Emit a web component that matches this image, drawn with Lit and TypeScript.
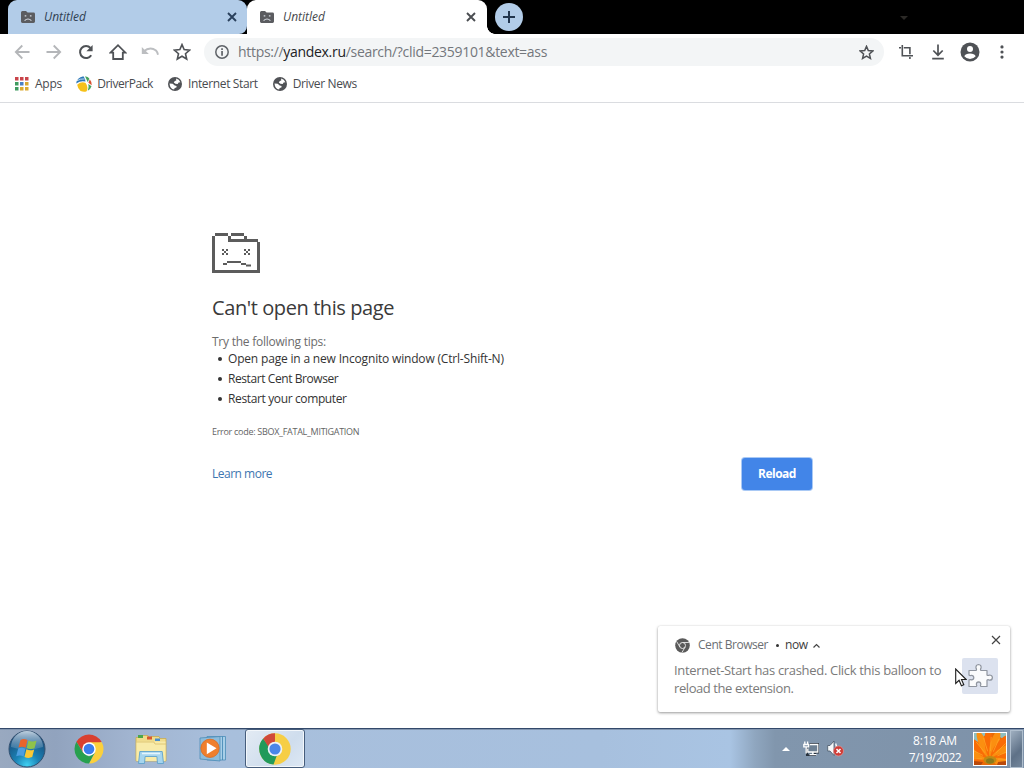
import { LitElement, html, css, svg } from "lit";
import { customElement, property } from "lit/decorators.js";
import { classMap } from "lit/directives/class-map.js";

const icon = (w: number, h: number, body: unknown, box = `0 0 ${w} ${h}`) =>
  html`<svg width=${w} height=${h} viewBox=${box}>${body}</svg>`;

const smallFolder = icon(14, 12, svg`
  <path d="M0 1.5Q0 0 1.4 0H5l1.6 1.6h6Q14 1.6 14 3v7.6Q14 12 12.6 12H1.4Q0 12 0 10.6Z" fill="#5b5c60"/>
  <path d="M3.7 4.2h1.6v1.4H3.7zM8.9 4.2h1.6v1.4H8.9z" fill="#d6dbe2"/>
  <path d="M3.6 9.6Q7 6.4 10.4 9.6" stroke="#d6dbe2" stroke-width="1.1" fill="none"/>`);

const sadFolder = icon(48, 40, svg`
  <path fill="#5c5c5c" d="M3 0h13v3H3zM0 3h3v37H0zM3 37h45v3H3zM45 9h3v28h-3zM16 3h3v5.500h-3zM19 0h13v3H19zM32 3h3v4h-3zM16 6h30v3H16z"/>
  <path fill="#5c5c5c" d="M10 16h2v2h-2zM14 16h2v2h-2zM12 18h2v2h-2zM10 20h2v2h-2zM14 20h2v2h-2zM32 16h2v2h-2zM36 16h2v2h-2zM34 18h2v2h-2zM32 20h2v2h-2zM36 20h2v2h-2z"/>
  <path fill="#5c5c5c" d="M11 30h4v2h-4zM15 28h14v2H15zM29 30h5v2h-5zM34 31.500h5v2h-5z"/>`);

const arrow = (flip: boolean) => icon(16, 16, svg`
  <path transform=${flip ? "translate(16 0) scale(-1 1)" : ""} d="M15.500 8H2M8.300 1.500L1.800 8l6.500 6.500" fill="none" stroke="#b4b6b9" stroke-width="1.800"/>`);

const reloadIcon = icon(16, 16, svg`
  <path d="M13.200 11.200A6 6 0 1 1 12.500 4" fill="none" stroke="#4f5256" stroke-width="2"/>
  <path d="M14.600 1v6.200H8.400Z" fill="#4f5256"/>`);

const homeIcon = icon(18, 18, svg`
  <path d="M1.500 9.700L9 2.200l7.500 7.500H13.800V16H4.200V9.700Z" fill="none" stroke="#4f5256" stroke-width="1.800"/>`);

const undoIcon = icon(18, 12, svg`
  <path d="M2.500 5.500Q9 .2 15 4.500 16.400 6 17 8.800" fill="none" stroke="#bcbec1" stroke-width="1.900"/>
  <path d="M.8 1v7h7Z" fill="#bcbec1"/>`);

const star = (s: number, w: number) => icon(s, s, svg`
  <path d="M9 1.600l2.150 5 5.450.5-4.120 3.600 1.230 5.300L9 13.200 4.290 16l1.230-5.300L1.400 7.100l5.450-.5Z" fill="none" stroke="#4f5256" stroke-width=${w} stroke-linejoin="miter"/>`, "0 0 18 18");

const infoIcon = icon(14, 14, svg`
  <circle cx="7" cy="7" r="6.200" fill="none" stroke="#5f6368" stroke-width="1.500"/>
  <path d="M6.200 3.300h1.700v1.600H6.200zM6.200 6.100h1.700v4.700H6.200z" fill="#5f6368"/>`);

const cropIcon = icon(14, 14, svg`
  <path d="M3.300 0V10.700H14M0 2.800h2M4.800 2.800H10.900V9.300M10.900 12v2" fill="none" stroke="#4f5256" stroke-width="1.600"/>`);

const downloadIcon = icon(14, 16, svg`
  <path d="M7 .5v10.300M2.300 6.500L7 11.200l4.700-4.700M1.200 14.600h11.600" fill="none" stroke="#4f5256" stroke-width="1.700"/>`);

const profileIcon = icon(20, 20, svg`
  <circle cx="10" cy="10" r="9.500" fill="#4f5256"/>
  <circle cx="10" cy="6.900" r="3" fill="#fff"/>
  <path d="M4.300 14.300Q5.500 11.600 10 11.600t5.700 2.700Q13.500 17 10 17t-5.700-2.700Z" fill="#fff"/>`);

const dotsIcon = icon(4, 14, svg`
  <circle cx="2" cy="1.900" r="1.600" fill="#4f5256"/><circle cx="2" cy="7" r="1.600" fill="#4f5256"/><circle cx="2" cy="12.100" r="1.600" fill="#4f5256"/>`);

const cross = (s: number, w: number, c: string) => icon(s, s, svg`
  <path d="M1 1l8 8M9 1L1 9" stroke=${c} stroke-width=${w}/>`, "0 0 10 10");

const appColors = ["#c9444a", "#c9444a", "#c9444a", "#3f9a5f", "#4a7fc4", "#d9a52e", "#3f9a5f", "#dcaa30", "#dcaa30"];
const appsIcon = icon(14, 14, appColors.map((c, i) =>
  svg`<rect x=${(i % 3) * 5} y=${Math.floor(i / 3) * 5} width="3.500" height="3.500" fill=${c}/>`));

const driverPackIcon = icon(16, 16, svg`
  <path d="M1.200 8.800Q5 5.200 9.400 6.800 12.800 11 10.600 15.200 8 16.400 4.600 14.900 1.600 12.800 1.200 8.800Z" fill="#f6c119"/>
  <path d="M.2 7.400Q.8 1.500 7.400.2L9 2.800 9.500 5.600Q5 4.200.2 7.400Z" fill="#2c78b8"/>
  <path d="M.8 4.800Q4 2.600 8.800 2.900" stroke="#fff" stroke-width=".7" fill="none"/>
  <path d="M9 .2q3 .3 4.300 2.400L11.800 6.200Z" fill="#45a35b"/>
  <path d="M13.800 3.300Q16 6 15.700 9.300L12.400 6.800Z" fill="#d9502f"/>
  <path d="M12.300 8l3.200 2.300Q14.500 13.500 11.800 14.800 13.300 11.500 12.300 8Z" fill="#45a35b"/>`);

const globeIcon = icon(14, 14, svg`
  <circle cx="7" cy="7" r="7" fill="#505256"/>
  <path d="M8 1.600q3.300.5 4.400 3.600l-1.800.2-.9 1.500-2.300-.2-1.600-1.200 1-1.500 1.500-.4Z" fill="#fff"/>
  <path d="M1.500 6.500l3.200.3 2 1.600 1.900.6-.2 1.500-1.700.5-.6 1.600Q2 12 1.500 6.500Z" fill="#fff"/>`);

const monoChrome = icon(15, 15, svg`
  <circle cx="7.500" cy="7.500" r="7.300" fill="#5a5a5a"/>
  <circle cx="7.500" cy="7.500" r="3" fill="none" stroke="#e8e8e8" stroke-width="1"/>
  <path d="M7.500 4.500h6.400M4.900 9L1.700 3.600M10.100 9l-3.200 5.600" stroke="#e8e8e8" stroke-width=".9"/>`);

const chromeLogo = (s: number) => icon(s, s, svg`
  <path d="M16 16L2.600 8.250A15.500 15.500 0 0 1 29.400 8.250Z" fill="#d9402f"/>
  <path d="M16 8.800H29.700A15.500 15.500 0 0 1 16 31.500L22.400 19.600Z" fill="#fbd03c"/>
  <path d="M2.600 8.250L9.800 20 16 16 17 8.800Z" fill="#d9402f"/>
  <path d="M2.600 8.250L9.500 19.600 16 24 22 20 16 31.500A15.500 15.500 0 0 1 2.600 8.250Z" fill="#27a04f"/>
  <circle cx="16" cy="16" r="7.200" fill="#fff"/><circle cx="16" cy="16" r="5.700" fill="#3b7ded"/>`, "0 0 32 32");

const activeChrome = icon(32, 32, svg`
  <circle cx="16" cy="16" r="15.700" fill="#f6ce45"/>
  <path d="M4.200 5.600A15.700 15.700 0 0 0 14.500 31.600L18 22 10 17 9.300 12.600Z" fill="#229a5a"/>
  <path d="M16 .3V9l-6.500 5L4.200 5.600A15.700 15.700 0 0 1 16 .3Z" fill="#d0493a"/>
  <circle cx="16" cy="16" r="7.300" fill="#eef2f6"/><circle cx="16" cy="16" r="5.600" fill="#4a86e8"/>`);

const startOrb = icon(38, 38, svg`
  <defs>
    <radialGradient id="orb" cx=".5" cy=".95" r=".85"><stop offset="0" stop-color="#3fd0f2"/><stop offset=".4" stop-color="#1b82b5"/><stop offset="1" stop-color="#194a78"/></radialGradient>
    <linearGradient id="gloss" x2="0" y2="1"><stop offset="0" stop-color="#dbe8f2" stop-opacity=".85"/><stop offset="1" stop-color="#8fb2cf" stop-opacity=".25"/></linearGradient>
  </defs>
  <circle cx="19" cy="19" r="18" fill="url(#orb)" stroke="#33506f" stroke-width="1"/>
  <path d="M3 17A16 16 0 0 1 35 17Q19 22 3 17Z" fill="url(#gloss)"/>
  <path d="M12.500 10q3.200-2 7 .1l-1.800 7.600q-3.400-1.900-7.200-.2Z" fill="#e8642c"/>
  <path d="M20.500 10.600q3.500 1.800 8 .1l-2 7.500q-3.900 1.600-7.800-.1Z" fill="#8fc24a"/>
  <path d="M10.200 18.500q3.500-1.600 7.200.3L15.600 26.500q-3.300-1.900-7.400-.3Z" fill="#4c9ee0"/>
  <path d="M18.400 19.300q3.600 1.900 7.800.1l-2 7.700q-3.700 1.700-7.700-.2Z" fill="#fbc835"/>`);

const explorerIcon = icon(34, 30, svg`
  <path d="M2 3.500h4l1-2h7l1 2h2v-1h8l1 2h6V27H2Z" fill="#f0dc8c" stroke="#c9ac50" stroke-width=".8"/>
  <path d="M4 1h5v3H4z" fill="#4ca64b"/><path d="M13 2.500h5v3h-5z" fill="#d9582e"/><path d="M21 4.500h5v2.500h-5z" fill="#4b8fcb"/>
  <path d="M2.500 7.500h29V27h-29Z" fill="#f8eba9"/>
  <path d="M2 8h18l1 2h11" stroke="#d9bf6a" stroke-width=".8" fill="none"/>
  <path d="M4.500 29.500l1.300-12h22.400l1.300 12h-6l-.6-7H11.100l-.6 7Z" fill="#a6d5ee" stroke="#5fa3cc" stroke-width=".9"/>
  <path d="M8 19.500h18" stroke="#e4f5fd" stroke-width="1.500"/>`);

const playerIcon = icon(28, 27, svg`
  <path d="M8 1.500H26.500V25H8Z" fill="#a8cfe8" stroke="#4b8db8" stroke-width=".8"/>
  <path d="M23.500 1.500V25" stroke="#3f83b0" stroke-width=".8"/>
  <path d="M1 3L21 1.500V26L1 24Z" fill="#8dbcdb" stroke="#4b8db8" stroke-width=".8"/>
  <circle cx="11" cy="13.300" r="9.200" fill="#ef7f2d" stroke="#d8681d" stroke-width=".7"/>
  <path d="M7.800 7.500L17.500 13.300 7.800 19.200Z" fill="#fff"/>`);

const networkIcon = icon(16, 15, svg`
  <path d="M6.500 3H15.300V11.500H12v2.700H4V6.500" fill="#6d8093" stroke="#27313d" stroke-width="2"/>
  <path d="M1.800 .5v3M4.600 .5v3M.8 3.500h4.800v2.300H.8zM3.200 6v6.500M6.800 3.500h8v7.500H4.800V7.500M9.800 11v2M6.500 13.700h7" fill="none" stroke="#fff" stroke-width="1.300"/>`);

const volumeIcon = icon(17, 17, svg`
  <path d="M.7 5.500H3L7 1v14.500L3 11H.7Z" fill="#f6f8fa" stroke="#475767" stroke-width=".8"/>
  <path d="M8.700 3.500Q10.500 8 8.700 12" stroke="#fff" stroke-width="1.300" fill="none"/>
  <circle cx="11.500" cy="11" r="5" fill="#cf3c37" stroke="#e9a19d" stroke-width=".6"/>
  <path d="M9.500 9l4 4M13.500 9l-4 4" stroke="#fff" stroke-width="1.500"/>`);

const petals = [-96, -70, -46, -24, -4, 17, 38, 60, 84, 106];
const flowerIcon = icon(32, 32, svg`
  <rect width="32" height="32" fill="#e86a08"/>
  <path d="M0 0h13L6 8 0 11ZM21 0h11v8l-6-4Z" fill="#8fbfc0"/>
  ${petals.map((a, i) => svg`<ellipse cx="16" cy="10" rx="4.200" ry="14" fill=${i % 2 ? "#fb8f10" : "#f96c06"} transform=${`rotate(${a} 16 26)`}/>`)}
  ${petals.map((a) => svg`<path d="M16 18V4" stroke="#ffa726" stroke-width=".7" transform=${`rotate(${a + 7} 16 26)`}/>`)}
  <path d="M0 28l9 1-2 3H0ZM24 29l8-1v4h-9Z" fill="#b9490a"/>
  <ellipse cx="16" cy="27" rx="6.500" ry="4" fill="#c08a14"/><ellipse cx="16" cy="28" rx="4" ry="2.800" fill="#8a7a1c"/>`);

const puzzleIcon = icon(26, 26, svg`
  <path d="M2 7.500H9Q10 6.500 9 5.200 8.600 1.800 11.500 1.500 14.600 1.800 14 5.200 13 6.500 14 7.500H20V12Q21 13 22.300 12 25.300 12 25.400 14.600 25.200 17.400 22.300 17.200 21 16.200 20 17.200V23.500H14Q13 22.700 13.800 21.500 13.900 19 11.600 18.900 9.300 19 9.400 21.500 10.200 22.700 9.200 23.500H2V17Q3 16.200 4.500 16.900 6.700 16.700 6.800 14.600 6.700 12.400 4.500 12.300 3 13 2 12Z" fill="#fafbfc" stroke="#8f959f" stroke-width="1.200" stroke-linejoin="round"/>`);

const cursor = icon(12, 19, svg`
  <path d="M.7 1v14.500l3.400-3.200 2.300 5.500 2.400-1-2.300-5.300h4.700Z" fill="#fff" stroke="#1c1c1c" stroke-width="1.100"/>`);

const blockSvg = css`svg { display: block; flex: none; }`;

@customElement("browser-tab")
class BrowserTab extends LitElement {
  @property({ type: Boolean }) active = false;
  static styles = [blockSvg, css`
    :host { display: block; width: 239px; height: 34px; }
    :host([active]) { width: 240px; }
    .tab { display: flex; align-items: center; box-sizing: border-box; width: 100%; height: 34px; padding: 0 10px 0 13px;
      border-radius: 9px 9px 8px 0; background: #b2cce8; color: #2f3f52; }
    .active { background: #fff; color: #45484c; border-radius: 9px 9px 0 0; padding-right: 11px; }
    .title { flex: 1; margin-left: 9px; font: italic 12px/18px "Open Sans", sans-serif; }
  `];
  render() {
    return html`<div class=${classMap({ tab: true, active: this.active })}>
      ${smallFolder}<span class="title">Untitled</span>${cross(10, 1.9, this.active ? "#4a4d51" : "#2a405c")}
    </div>`;
  }
}

@customElement("app-root")
class AppRoot extends LitElement {
  static styles = [blockSvg, css`
    :host { display: flex; flex-direction: column; width: 1024px; height: 768px; overflow: hidden; position: relative;
      background: #fff; font-family: "Open Sans", "Noto Sans", sans-serif; font-size: 12px; line-height: 20px; color: #333; }
    span, a, p, h1, li { white-space: nowrap; }
    .strip { display: flex; height: 34px; padding-left: 8px; background: #000; flex: none; align-items: center; }
    .under { width: 239px; height: 34px; background: #fff; border-radius: 9px 18px 0 0; }
    .flare { width: 8px; height: 8px; align-self: flex-end; background: radial-gradient(circle at 100% 0, transparent 7.500px, #fff 8px); }
    .plus { display: grid; place-items: center; width: 28px; height: 28px; border-radius: 50%; background: #b2cce8; }
    .caret { margin-left: 377px; margin-top: 2px; border: 4px solid transparent; border-top-color: #2b2926; border-bottom: 0; }
    .toolbar { display: flex; align-items: center; height: 36px; flex: none; padding-left: 6px; }
    .nav, .tools { display: flex; align-items: center; flex: none; }
    .cell { display: grid; place-items: center; width: 32px; }
    .omni { display: flex; align-items: center; flex: none; box-sizing: border-box; width: 680px; height: 28px; margin-left: 6px;
      padding: 0 10px 0 11px; border-radius: 14px; background: #f3f5f6; }
    .url { flex: 1; margin-left: 9px; font-size: 14px; letter-spacing: -.306px; color: #73777c; }
    .url b { font-weight: 400; color: #202124; }
    .tools { margin-left: 6px; }
    .marks { display: flex; align-items: center; flex: none; height: 33px; padding: 0 0 5px 15px; border-bottom: 1px solid #dadce0; box-sizing: border-box; }
    .mark { display: flex; align-items: center; color: #484b4f; }
    .page { flex: 1; padding: 130px 212px 0; min-height: 0; }
    h1 { margin: 23px 0 0; font-size: 20px; line-height: 24px; font-weight: 400; letter-spacing: -.41px; color: #3a3a3a; }
    .tips { margin: 13px 0 0; line-height: 18px; letter-spacing: -.24px; color: #6c6c6c; }
    ul { margin: -2px 0 0; padding: 0; list-style: none; }
    li { display: flex; align-items: center; height: 20px; }
    li::before { content: ""; width: 4px; height: 4px; border-radius: 50%; background: #333; margin: 0 6px 1px; }
    .code { margin: 15px 0 0; font-size: 9px; line-height: 16px; letter-spacing: -.29px; color: #646464; }
    .actions { display: flex; align-items: center; justify-content: space-between; width: 600px; margin-top: 18px; }
    .link { color: #3d76b0; letter-spacing: -.5px; }
    .reload { display: grid; place-items: center; width: 70px; height: 32px; border-radius: 3px; background: #4285e8; box-shadow: 0 0 0 1px #a9c9f5;
      color: #fff; font-weight: 700; letter-spacing: -.5px; }
    .toast { position: absolute; left: 658px; top: 626px; box-sizing: border-box; width: 352px; height: 86px; background: #fff; border-radius: 2px;
      box-shadow: 0 1px 3px rgba(0,0,0,.4), 0 0 1px rgba(0,0,0,.12); display: flex; padding: 9px 9px 0 16px; }
    .words { flex: 1; min-width: 0; }
    .source { display: flex; align-items: center; height: 20px; padding-left: 1px; color: #6c6f73; }
    .dot { width: 3px; height: 3px; border-radius: 50%; background: #333; margin: 0 6px 0 8px; }
    .now { color: #3c3c3c; letter-spacing: -.4px; margin-right: 5px; }
    .words p { margin: 0; font-size: 13px; line-height: 18px; color: #7a7a7a; }
    .side { display: flex; flex-direction: column; align-items: flex-end; }
    .puzzle { display: grid; place-items: center; width: 36px; height: 36px; margin: 13px 3px 0 0; background: #dce2ef; border-radius: 2px; }
    .pointer { position: absolute; left: 955px; top: 668px; }
    .taskbar { display: flex; align-items: center; flex: none; box-sizing: border-box; height: 40px; border-top: 1px solid #33496a; color: #fff;
      background: linear-gradient(90deg, #99a9c0 0, #91a3be 55px, #a1b4d0 130px, #a8bfdc 220px, #a7c0de 600px, #a9c4e3 730px, #8fa6bf 755px, #8196ad 775px, #7e92a9 1024px);
      box-shadow: inset 0 1px 0 #8296b0; }
    .orb { margin-left: 8px; }
    .t1 { margin-left: 28px; } .t2 { margin-left: 30px; } .t3 { margin-left: 31px; }
    .running { display: grid; place-items: center; box-sizing: border-box; width: 60px; height: 39px; margin-left: 18px; border: 1px solid #465d7c; border-radius: 3px;
      box-shadow: inset 0 0 0 1px #f3f7fb; background: linear-gradient(135deg, #e3ebf4, #cfdded 60%, #dde8f4); }
    .up { margin-left: 477px; border: 4px solid transparent; border-bottom-color: #fff; border-top: 0; }
    .net { margin-left: 13px; } .vol { margin-left: 8px; }
    .clock { width: 64px; margin-left: 59px; text-align: center; line-height: 17px; }
    .clock span { display: block; }
    .user { margin-left: 6px; border: 1px solid #fff; }
    .peek { width: 13px; height: 38px; box-sizing: border-box; margin-left: 3px; border: 1px solid #b0bfce; background: linear-gradient(135deg, #9fafc0, #5e7187 60%, #73869b); }
  `];
  private mark(glyph: unknown, label: string, spacing: number, left: number, gap: number) {
    return html`<div class="mark" style=${`margin-left:${left}px;gap:${gap}px`}>${glyph}<span style=${`letter-spacing:${spacing}px`}>${label}</span></div>`;
  }
  render() {
    return html`
      <div class="strip">
        <browser-tab></browser-tab>
        <browser-tab active></browser-tab>
        <div class="flare"></div>
        <div class="plus">${icon(14, 14, svg`<path d="M7 1v12M1 7h12" stroke="#22354d" stroke-width="2"/>`)}</div>
        <div class="caret"></div>
      </div>
      <div class="toolbar">
        <div class="nav">
          ${[arrow(false), arrow(true), reloadIcon, homeIcon, undoIcon, star(18, 1.6)].map((g) => html`<div class="cell">${g}</div>`)}
        </div>
        <div class="omni">${infoIcon}<span class="url">https://<b>yandex.ru</b>/search/?clid=2359101&amp;text=ass</span>${star(15, 1.8)}</div>
        <div class="tools">${[cropIcon, downloadIcon, profileIcon, dotsIcon].map((g) => html`<div class="cell">${g}</div>`)}</div>
      </div>
      <div class="marks">
        ${this.mark(appsIcon, "Apps", -0.22, 0, 6)}
        ${this.mark(driverPackIcon, "DriverPack", -0.44, 14, 5)}
        ${this.mark(globeIcon, "Internet Start", -0.36, 15, 6)}
        ${this.mark(globeIcon, "Driver News", -0.38, 15, 6)}
      </div>
      <div class="page">
        ${sadFolder}
        <h1>Can't open this page</h1>
        <p class="tips">Try the following tips:</p>
        <ul>
          <li style="letter-spacing:-.18px">Open page in a new Incognito window (Ctrl-Shift-N)</li>
          <li style="letter-spacing:-.42px">Restart Cent Browser</li>
          <li style="letter-spacing:-.37px">Restart your computer</li>
        </ul>
        <p class="code">Error code: SBOX_FATAL_MITIGATION</p>
        <div class="actions"><a class="link">Learn more</a><div class="reload">Reload</div></div>
      </div>
      <div class="taskbar">
        <div class="orb">${startOrb}</div>
        <div class="t1">${chromeLogo(30)}</div>
        <div class="t2">${explorerIcon}</div>
        <div class="t3">${playerIcon}</div>
        <div class="running">${activeChrome}</div>
        <div class="up"></div>
        <div class="net">${networkIcon}</div>
        <div class="vol">${volumeIcon}</div>
        <div class="clock"><span style="letter-spacing:-.2px">8:18 AM</span><span style="letter-spacing:-.5px">7/19/2022</span></div>
        <div class="user">${flowerIcon}</div>
        <div class="peek"></div>
      </div>
      <div class="toast">
        <div class="words">
          <div class="source">${monoChrome}<span style="margin-left:8px;letter-spacing:-.46px">Cent Browser</span><i class="dot"></i><span class="now">now</span>
            ${icon(7, 5, svg`<path d="M.5 4.500l3-3 3 3" fill="none" stroke="#444" stroke-width="1.200"/>`)}</div>
          <p style="letter-spacing:-.32px;margin-top:6px">Internet-Start has crashed. Click this balloon to</p>
          <p style="letter-spacing:-.42px">reload the extension.</p>
        </div>
        <div class="side">${cross(10, 1.2, "#444")}<div class="puzzle">${puzzleIcon}</div></div>
      </div>
      <div class="pointer">${cursor}</div>
    `;
  }
}
